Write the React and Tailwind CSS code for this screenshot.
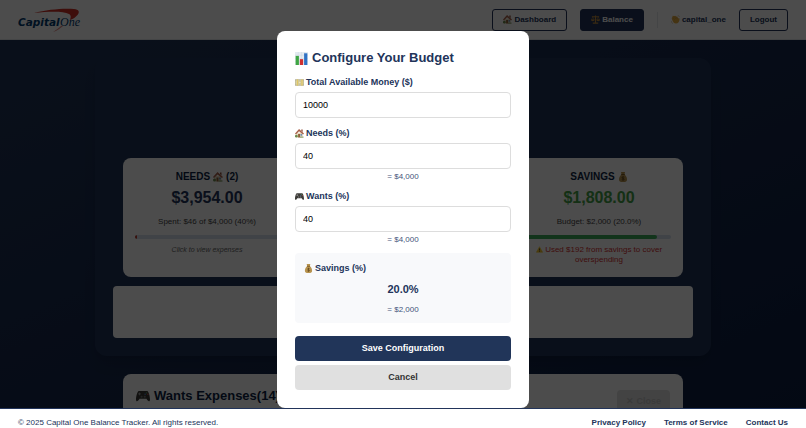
import React, {useState} from 'react';

function Icon({ className, children }) {
    return (
        <svg viewBox="0 0 20 20" aria-hidden="true" className={`inline-block shrink-0 ${className}`}>
            {children}
        </svg>
    );
}

function HouseIcon({ className }) {
    return (
        <Icon className={className}>
            <path d="M3 8h14v11H3z" fill="#e9dcc3"/>
            <path d="M0 10 9 0l11 10-2 2-9-7-7 7z" fill="#a9614a"/>
            <path d="M14 1h3v6l-3-3z" fill="#8d4a35"/>
            <path d="M7 11h4v8H7z" fill="#8a5a33"/>
            <path d="M12 11h4v4h-4z" fill="#6f8fb0"/>
            <circle cx="3" cy="16" r="3" fill="#6d8a4d"/>
            <path d="M11 17h8v2h-8z" fill="#6d8a4d"/>
        </Icon>
    );
}

function MoneyBagIcon({ className }) {
    return (
        <Icon className={className}>
            <path d="M6 0h8l-1 5c4 3 5 7 5 10 0 4-2 5-8 5s-8-1-8-5c0-3 1-7 5-10z" fill="#b8944f"/>
            <path d="M6.500 4h7v2h-7z" fill="#7b5a24"/>
            <path d="M12.500 10.500c-1-1-4.500-1-4.500.8 0 2 4.500 1.200 4.500 3.200 0 1.800-4 1.700-5 .5M10 8.500v8.500" stroke="#5c4219" strokeWidth="1.400" fill="none"/>
        </Icon>
    );
}

function GamepadIcon({ className }) {
    return (
        <Icon className={className}>
            <path d="M4 3h12c2 0 4 8 4 12 0 4-3 3-5-1H5c-2 4-5 5-5 1C0 11 2 3 4 3z" fill="#3d3b38"/>
            <path d="M5 5v4M3 7h4" stroke="#a9a9a9" strokeWidth="1.200"/>
            <circle cx="15" cy="5.500" r="1" fill="#58a55c"/>
            <circle cx="17" cy="7.500" r="1" fill="#d2524c"/>
            <circle cx="13" cy="7.500" r="1" fill="#5b87cf"/>
            <circle cx="8" cy="11" r="1.500" fill="#777"/>
            <circle cx="12.500" cy="11" r="1.500" fill="#777"/>
        </Icon>
    );
}

function ChartIcon({ className }) {
    return (
        <Icon className={className}>
            <path d="M0 0h20v20H0z" fill="#e4ebf1"/>
            <path d="M0 5h20M0 10h20M0 15h20M5 0v20M10 0v20M15 0v20" stroke="#c9d5df" strokeWidth=".6"/>
            <path d="M1 6h5v14H1z" fill="#3fa644"/>
            <path d="M7.500 11h5v9h-5z" fill="#cf3030"/>
            <path d="M14 2h5v18h-5z" fill="#2f72c4"/>
        </Icon>
    );
}

function BanknoteIcon({ className }) {
    return (
        <Icon className={className}>
            <path d="M0 3h20v14H0z" fill="#a9a68c"/>
            <path d="M1 5h18v10H1z" fill="#dcd5a8"/>
            <path d="M4 3h3v14H4zM14 3h3v14h-3z" fill="#e0c766"/>
            <circle cx="10.500" cy="10" r="3" fill="#f2e6a8" stroke="#a9a68c"/>
        </Icon>
    );
}

function ScaleIcon({ className }) {
    return (
        <Icon className={className}>
            <path d="M10 1v16M2 4h16M4 18h12" stroke="#c08a3c" strokeWidth="2.500"/>
            <path d="M4 4 1 11h6zM16 4l-3 7h6z" stroke="#c08a3c" fill="none"/>
            <path d="M0 10h8c0 5-8 5-8 0zM12 10h8c0 5-8 5-8 0z" fill="#c08a3c"/>
        </Icon>
    );
}

function WaveIcon({ className }) {
    return (
        <Icon className={className}>
            <path d="M2 9c-1-3 0-4 2-4L3 3c1-2 3-1 4 0 1-2 3-2 4 0l1 1c2-1 3 0 3 2l1 2c1-2 3-2 3 1 0 6-3 10-8 10-4 0-7-3-9-10z" fill="#e8ad42"/>
            <path d="m4 5 4 6M7 3l4 6M12 4l2 5M1 14c0 2 1 4 3 5M15 1c2 0 3 2 4 3" stroke="#b68a3c" fill="none"/>
        </Icon>
    );
}

function WarningIcon({ className }) {
    return (
        <Icon className={className}>
            <path d="M10 2 19 18H1z" fill="#f4c52d" stroke="#f4c52d" strokeWidth="1.500" strokeLinejoin="round"/>
            <path d="M10 7v6M10 14.500v2" stroke="#222" strokeWidth="2"/>
        </Icon>
    );
}

function Logo() {
    return (
        <svg viewBox="0 0 64 24" role="img" aria-label="Capital One" className="h-6 w-16">
            <path d="M16 5C29 1.500 46 0 56 1c5 .5 6 3 3.500 6-2 2-4 4-7.500 5 .8-2.500 1.500-4.500-1-6C45 3 31 3.500 16 5z" fill="#d03027"/>
            <path d="M43 18c-2 2-5 4-8 6 4-1 7-4 10-6z" fill="#d03027" opacity=".6"/>
            <text x="0" y="18" fontFamily="'DejaVu Sans', sans-serif" fontWeight="700" fontStyle="italic" fontSize="10.500" fill="#003a6f">Capital</text>
            <text x="42" y="18" fontFamily="'Liberation Serif', serif" fontStyle="italic" fontSize="12" fill="#003a6f">One</text>
        </svg>
    );
}

function Header({ username }) {
    return (
        <header className="flex h-10 shrink-0 items-center justify-between border-b border-gray-200 bg-white px-[18px]">
            <a href="#home"><Logo/></a>
            <nav className="flex items-center text-[8px] leading-3 font-bold text-[#22345a]">
                <a href="#dashboard" className="flex h-[22px] items-center gap-0.5 rounded-[3px] border border-[#22345a] px-2.5">
                    <HouseIcon className="size-[9px]"/>Dashboard
                </a>
                <a href="#balance" className="ml-[13px] flex h-[22px] items-center gap-0.5 rounded-[3px] border border-[#22345a] bg-[#22345a] px-2.5 text-white">
                    <ScaleIcon className="size-[9px]"/>Balance
                </a>
                <span className="ml-[13px] flex h-4 items-center gap-0.5 border-l border-gray-200 pl-[13px]">
                    <WaveIcon className="size-[9px]"/>{username}
                </span>
                <button type="button" className="ml-[13px] h-[22px] rounded-[3px] border border-[#22345a] px-2.5">Logout</button>
            </nav>
        </header>
    );
}

function BudgetCard({ title, icon, amount, amountClass, detail, percent, barClass, children }) {
    return (
        <section className="flex h-[119px] flex-col rounded-lg bg-white px-3 pt-3 text-center">
            <h2 className="flex items-center justify-center gap-[3px] text-[10px] leading-[14px] font-bold text-[#0c1f44]">{title} {icon}</h2>
            <p className={`mt-1 text-[16px] leading-5 font-bold ${amountClass}`}>{amount}</p>
            <p className="mt-2 text-[8px] leading-3 text-[#444]">{detail}</p>
            <div className="mt-[7px] h-1 shrink-0 overflow-hidden rounded-full bg-[#d5dfee]">
                <div className={`h-full rounded-full ${barClass}`} style={{ width: `${percent}%` }}></div>
            </div>
            {children}
        </section>
    );
}

function PercentField({ id, label, icon, value, onChange, amount }) {
    return (
        <div>
            <label htmlFor={id} className="flex items-center gap-0.5 text-[9px] leading-3 font-bold text-[#22345a]">{icon}{label}</label>
            <input id={id}
                   type="number"
                   value={value}
                   onChange={e => onChange(e.target.value)}
                   className="mt-1 block h-[26px] w-full rounded border border-[#dddddd] bg-white px-[7px] text-[9px] text-black"/>
            {amount && <p className="mt-[3px] text-center text-[8px] leading-[9px] text-[#44547a]">= {amount}</p>}
        </div>
    );
}

function ConfigureModal() {
    const [total, setTotal] = useState('10000');
    const [needs, setNeeds] = useState('40');
    const [wants, setWants] = useState('40');

    const savings = 100 - Number(needs) - Number(wants);
    const toAmount = (percent) => '$' + (Number(total) * Number(percent) / 100).toLocaleString('en-US');

    return (
        <div className="fixed inset-0 flex items-start justify-center bg-black/70 pt-[31px]">
            <form role="dialog" aria-labelledby="budget-title" onSubmit={e => e.preventDefault()}
                  className="flex w-full max-w-[252px] flex-col gap-[9px] rounded-lg bg-white p-[18px]">
                <h2 id="budget-title" className="flex items-center gap-1 text-[13px] leading-[18px] font-bold text-[#22345a]">
                    <ChartIcon className="size-[13px]"/>Configure Your Budget
                </h2>
                <PercentField id="total" label="Total Available Money ($)" icon={<BanknoteIcon className="size-[9px]"/>}
                              value={total} onChange={setTotal}/>
                <PercentField id="needs" label="Needs (%)" icon={<HouseIcon className="size-[9px]"/>}
                              value={needs} onChange={setNeeds} amount={toAmount(needs)}/>
                <PercentField id="wants" label="Wants (%)" icon={<GamepadIcon className="size-[9px]"/>}
                              value={wants} onChange={setWants} amount={toAmount(wants)}/>
                <div className="rounded bg-[#f8f9fb] p-[9px] text-[#22345a]">
                    <h3 className="flex items-center gap-0.5 text-[9px] leading-3 font-bold">
                        <MoneyBagIcon className="size-[9px]"/>Savings (%)
                    </h3>
                    <p className="mt-2 text-center text-[11px] leading-[15px] font-bold">{savings.toFixed(1)}%</p>
                    <p className="mt-2 text-center text-[8px] leading-[9px] text-[#44547a]">= {toAmount(savings)}</p>
                </div>
                <div className="flex flex-col gap-1 pt-1 text-[9px] font-bold">
                    <button type="submit" className="h-[25px] rounded bg-[#213559] text-white">Save Configuration</button>
                    <button type="button" className="h-[25px] rounded bg-[#e0e0e0] text-[#333]">Cancel</button>
                </div>
            </form>
        </div>
    );
}

export default function App() {
    return (
        <div className="flex h-screen flex-col overflow-hidden bg-white font-['Liberation_Sans',Arial,sans-serif]">
            <Header username="capital_one"/>
            <main className="min-h-0 flex-1 overflow-hidden bg-linear-to-br from-[#213559] to-[#0d1e42] px-4 pt-[18px]">
                <div className="mx-auto flex h-[298px] max-w-[616px] flex-col justify-end rounded-xl bg-[#213559] px-[18px] pb-[18px] shadow-lg">
                    <div className="grid grid-cols-3 gap-7 px-2.5">
                        <BudgetCard title="NEEDS" icon={<><HouseIcon className="size-[10px]"/> (2)</>}
                                    amount="$3,954.00" amountClass="text-[#22345a]"
                                    detail="Spent: $46 of $4,000 (40%)" percent={1.2} barClass="bg-[#c0392b]">
                            <p className="mt-[6px] text-[7px] leading-[10px] text-[#666] italic">Click to view expenses</p>
                        </BudgetCard>
                        <section className="rounded-lg bg-white"></section>
                        <BudgetCard title="SAVINGS" icon={<MoneyBagIcon className="size-[10px]"/>}
                                    amount="$1,808.00" amountClass="text-[#43a047]"
                                    detail="Budget: $2,000 (20.0%)" percent={90.4} barClass="bg-[#3fae5c]">
                            <p className="mt-[6px] text-[8px] leading-[10px] text-[#d32f2f]">
                                <WarningIcon className="size-[7px]"/> Used $192 from savings to cover overspending
                            </p>
                        </BudgetCard>
                    </div>
                    <div className="mt-[9px] h-[52px] shrink-0 rounded bg-white"></div>
                </div>
                <section className="mx-auto mt-[18px] flex h-20 max-w-[560px] items-start justify-between rounded-lg bg-white px-[13px] pt-[14px]">
                    <h2 className="flex items-center gap-1 text-[13px] leading-4 font-bold text-[#0c1f44]">
                        <GamepadIcon className="size-[14px]"/>Wants Expenses(14)
                    </h2>
                    <button type="button" className="mt-0.5 h-6 rounded bg-[#e0e0e0] px-[9px] text-[9px] font-bold text-[#c4c4c4]">✕ Close</button>
                </section>
            </main>
            <ConfigureModal/>
            <footer className="relative flex shrink-0 items-center justify-between border-t border-[#22345a] bg-white px-[18px] pt-[9px] text-[8px] leading-[10px] text-[#22345a]">
                <p>© 2025 Capital One Balance Tracker. All rights reserved.</p>
                <nav className="flex gap-[18px] font-bold">
                    <a href="#privacy">Privacy Policy</a>
                    <a href="#terms">Terms of Service</a>
                    <a href="#contact">Contact Us</a>
                </nav>
            </footer>
        </div>
    )
}
